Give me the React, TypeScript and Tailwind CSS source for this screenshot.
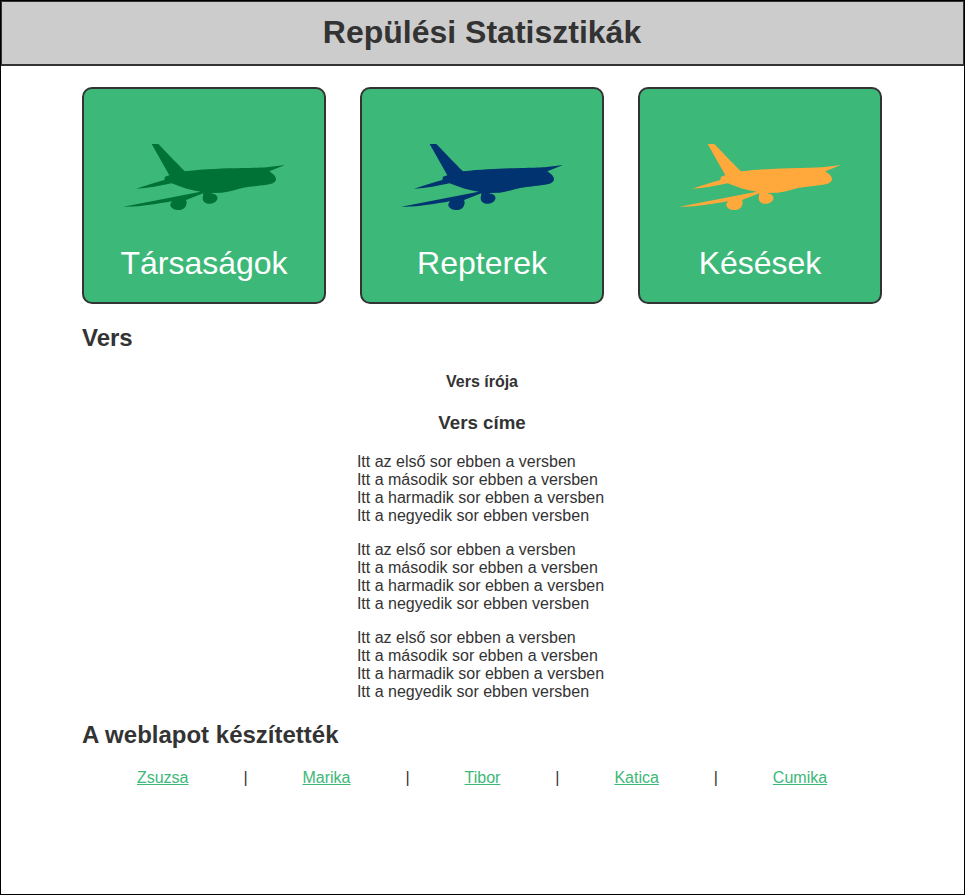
const plane =
  "M125 42 L145 42 C165 62 200 100 225 124 C290 117 340 115 400 114 C430 114 450 113 470 112 L525 105 L478 124 C490 132 499 140 498 149 C495 158 485 162 470 164 C440 168 420 170 400 173 C380 177 360 185 335 188 L305 189 L306 191 C318 191 324 199 322 207 C319 218 305 223 293 221 C282 219 275 210 279 198 L280 190 L228 210 C231 216 230 222 228 226 C226 236 215 241 203 240 C190 239 180 232 181 222 L186 214 C140 222 85 232 40 230 L272 185 C240 181 215 172 185 160 C150 167 115 175 78 176 C105 168 135 158 163 150 L165 140 L178 136 Z";

function Card({ label, color }: { label: string; color: string }) {
  return (
    <div className="flex h-[217px] w-[244px] flex-col items-center rounded-[10px] border-2 border-[#333333] bg-[#3cb878] pt-[41px]">
      <svg viewBox="-3 0 570 270" width={190} height={90} className="block" aria-hidden="true">
        <path d={plane} fill={color} />
      </svg>
      <div className="mt-[25px] text-[32px] leading-[37px] text-white">{label}</div>
    </div>
  );
}

function Stanza() {
  return (
    <p className="mb-4">
      Itt az első sor ebben a versben
      <br />
      Itt a második sor ebben a versben
      <br />
      Itt a harmadik sor ebben a versben
      <br />
      Itt a negyedik sor ebben versben
    </p>
  );
}

export default function App() {
  const names = ["Zsuzsa", "Marika", "Tibor", "Katica", "Cumika"];
  return (
    <div className="h-[895px] border border-black bg-white font-['Liberation_Sans',Arial,sans-serif] text-base leading-[18px] text-[#333333]">
      <header className="h-[65px] border-b-2 border-[#333333] bg-[#cccccc] pt-[13px] pr-[1px] text-center outline outline-1 -outline-offset-1 outline-[#333333]">
        <h1 className="text-[32px] leading-[37px] font-bold">Repülési Statisztikák</h1>
      </header>
      <main className="ml-[81px] w-[800px]">
        <div className="mt-[21px] flex justify-between">
          <Card label="Társaságok" color="#007236" />
          <Card label="Repterek" color="#00336f" />
          <Card label="Késések" color="#ffa93d" />
        </div>
        <h2 className="mt-[20px] text-2xl leading-[27px] font-bold">Vers</h2>
        <div className="text-center">
          <h4 className="mt-[22px] font-bold">Vers írója</h4>
          <h3 className="mt-[21px] text-[18.72px] leading-[21px] font-bold">Vers címe</h3>
          <div className="mt-[20px] mr-[3px] inline-block text-left">
            <Stanza />
            <Stanza />
            <Stanza />
          </div>
        </div>
        <h2 className="mt-[4px] text-2xl leading-[27px] font-bold">A weblapot készítették</h2>
        <nav className="mt-[21px] flex justify-evenly">
          {names.map((n, i) => (
            <div key={n} className="contents">
              {i > 0 && <span>|</span>}
              <a href="#" className="text-[#3cb878] underline">
                {n}
              </a>
            </div>
          ))}
        </nav>
      </main>
    </div>
  );
}
